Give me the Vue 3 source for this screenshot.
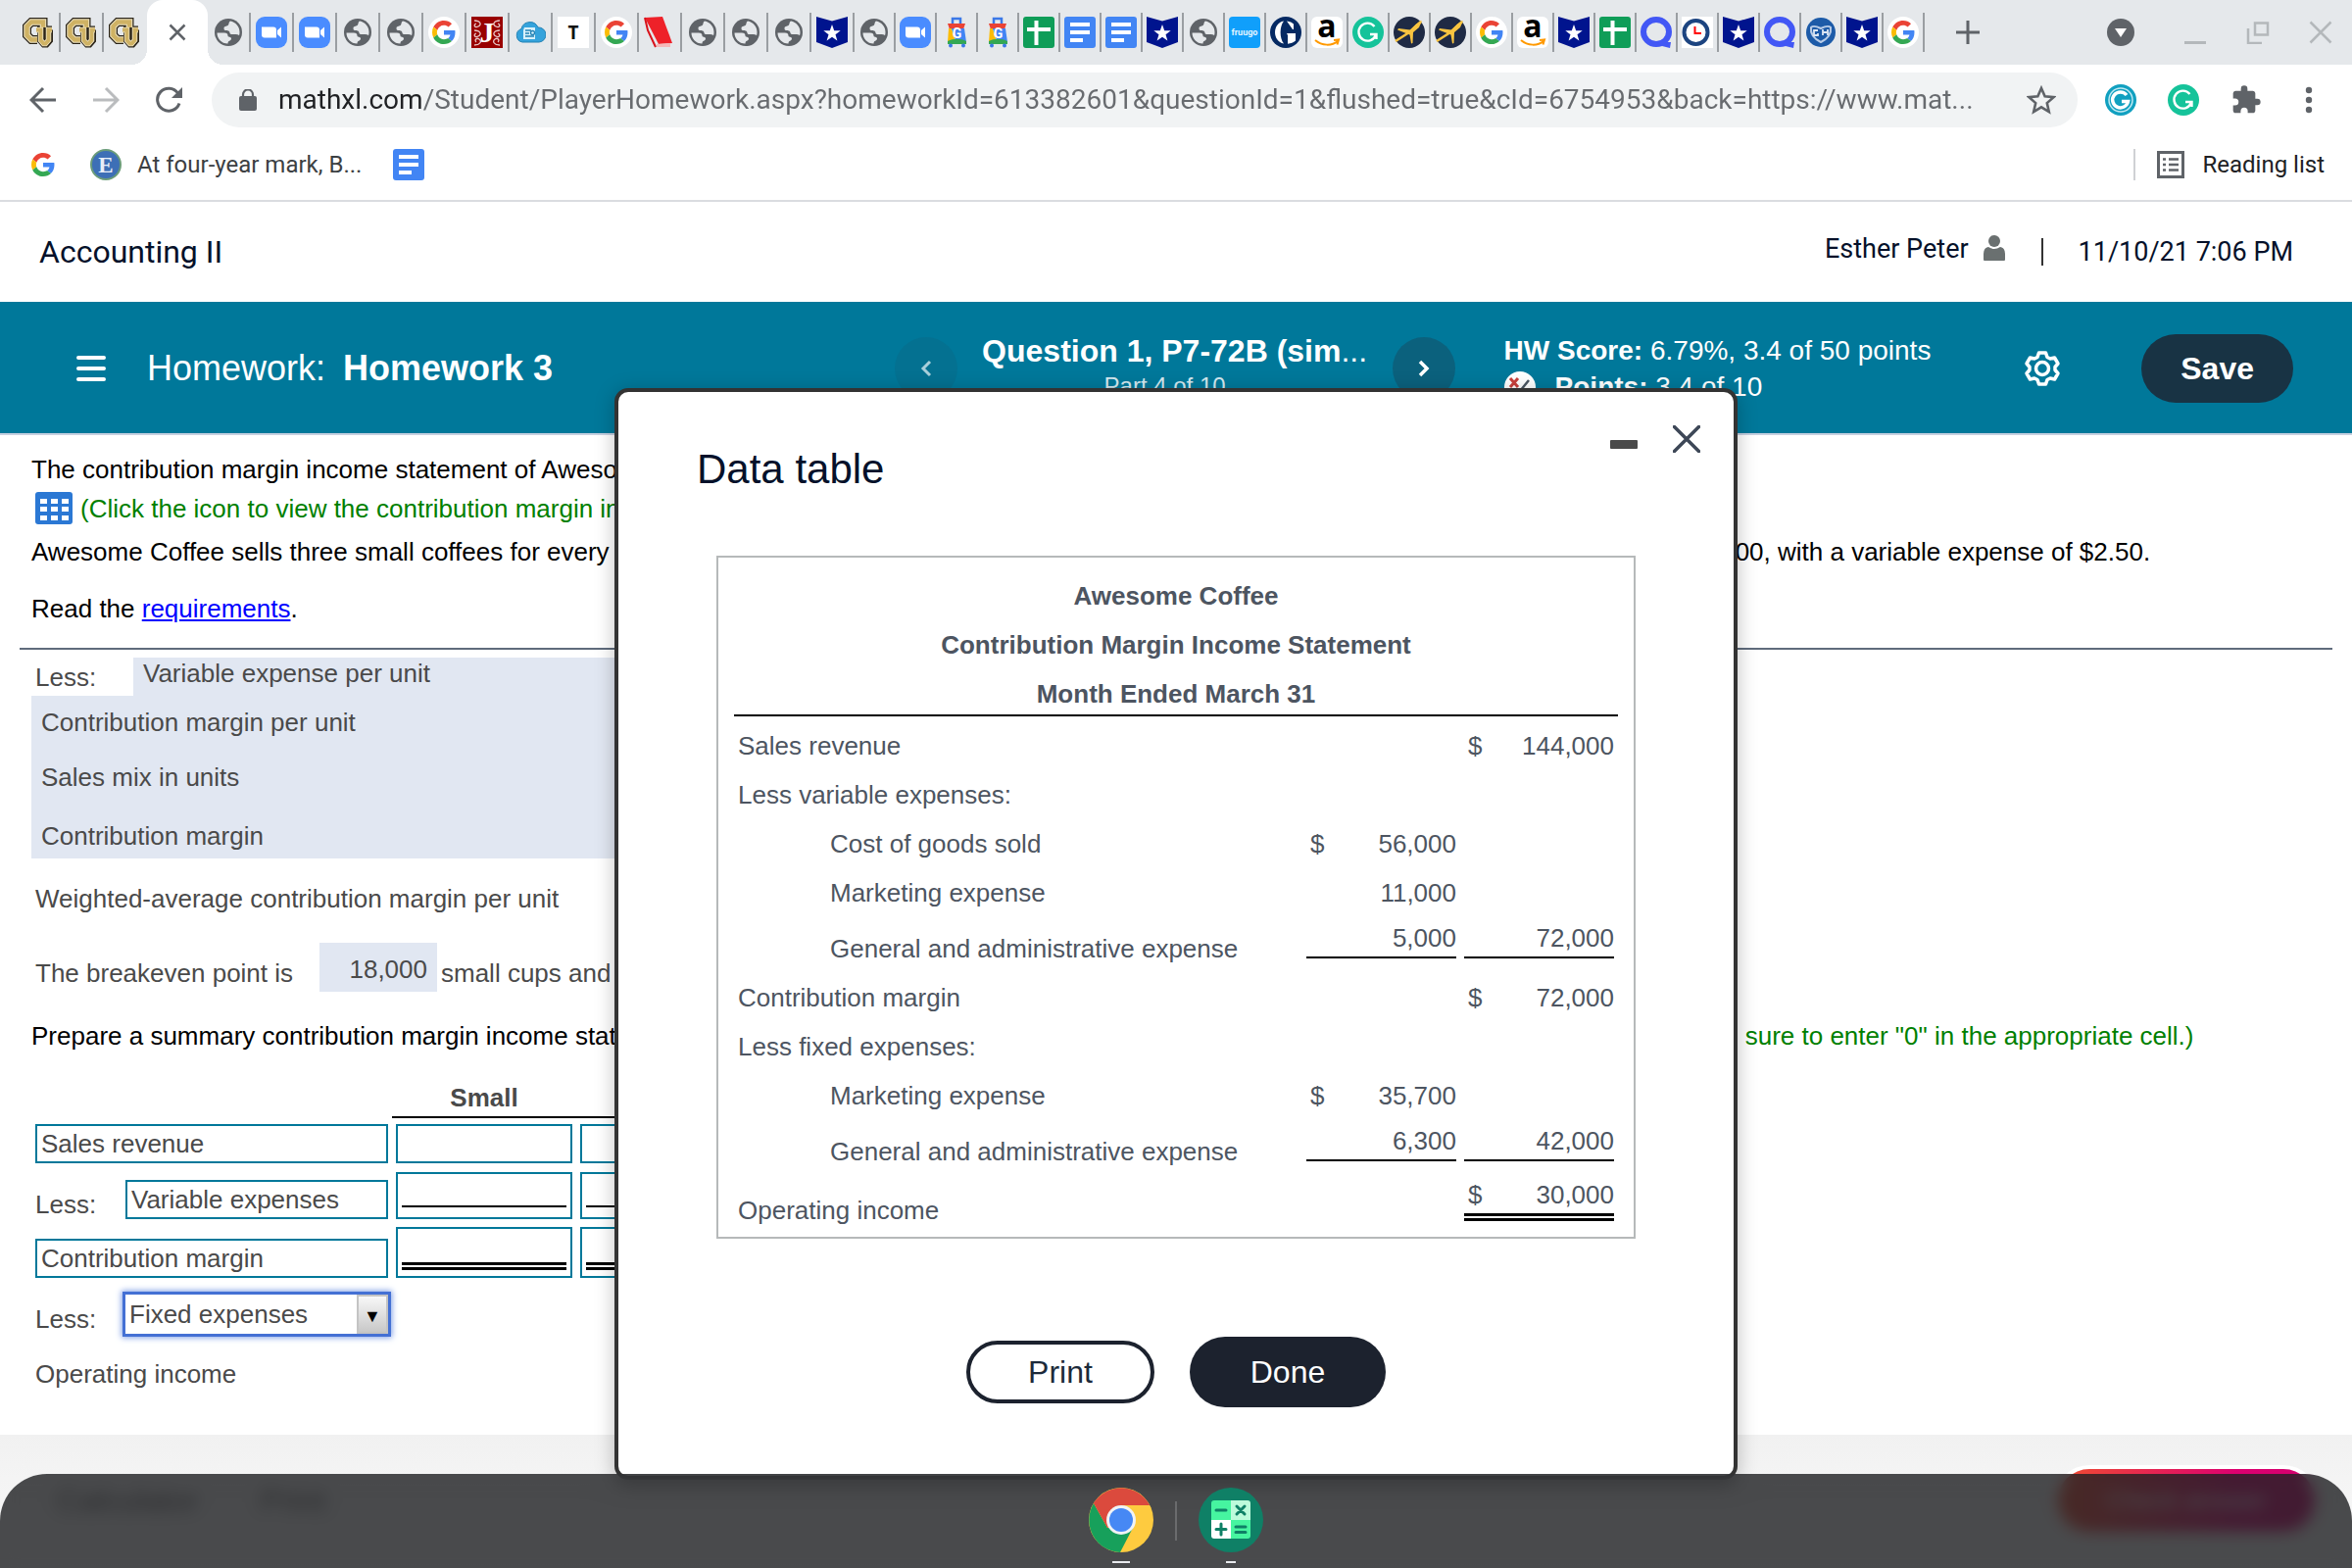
<template>
  <div class="screen">
    <svg class="symbols" aria-hidden="true">
      <symbol id="i-cu" viewBox="0 0 32 32">
        <path d="M21 11V5.500H9L4.500 10v9L9 23.500h6" fill="none" stroke="#2b2418" stroke-width="9" />
        <path d="M15 13.500h4V24l3 3.500h2l3-3.500V13.500h3" fill="none" stroke="#2b2418" stroke-width="8" />
        <path d="M21 11V5.500H9L4.500 10v9L9 23.500h6" fill="none" stroke="#f1e6c4" stroke-width="6.500" />
        <path d="M21 11V5.500H9L4.500 10v9L9 23.500h6" fill="none" stroke="#cfb264" stroke-width="4.500" />
        <path d="M14 13.500h4.500V24l3 3.500h2l3-3.500V13.500H30" fill="none" stroke="#f1e6c4" stroke-width="5.500" />
        <path d="M14 13.500h4.500V24l3 3.500h2l3-3.500V13.500H30" fill="none" stroke="#cfb264" stroke-width="3.800" />
      </symbol>
      <symbol id="i-globe" viewBox="0 0 32 32">
        <circle cx="16" cy="16" r="14" fill="#5f6368" />
        <path d="M18 4.500c5.500 1 9.500 5.500 9.500 11.500 0 1.200-.2 2.300-.5 3.300-1-1.300-2.500-1.300-4.500-1.300h-3.500c-2 0-1-3-3-3.500s-4.500 0-4.500-2.500 2.500-2 4-3 .5-3.300 2.500-4.500z" fill="#e5e8eb" />
        <path d="M4.500 16.500H12c2.500 0 3.500 1.200 3.500 3s3.500.5 3.500 3-3.500 1.500-3.500 5C9 27.500 4.500 22.500 4.500 16.500z" fill="#e5e8eb" />
      </symbol>
      <symbol id="i-zoom" viewBox="0 0 32 32">
        <rect width="32" height="32" rx="9" fill="#4a8cff" />
        <path d="M6 10.500h12q3 0 3 3v8H9q-3 0-3-3zM22 14l4-3.500v11L22 18z" fill="#fff" />
      </symbol>
      <symbol id="i-g" viewBox="0 0 48 48">
        <path fill="#EA4335" d="M24 9.500c3.540 0 6.710 1.220 9.210 3.600l6.850-6.850C35.900 2.380 30.470 0 24 0 14.620 0 6.510 5.380 2.560 13.220l7.980 6.190C12.430 13.720 17.740 9.500 24 9.500z" />
        <path fill="#4285F4" d="M46.980 24.550c0-1.570-.15-3.090-.38-4.550H24v9.020h12.940c-.58 2.960-2.260 5.480-4.780 7.180l7.730 6c4.510-4.180 7.090-10.360 7.090-17.650z" />
        <path fill="#FBBC05" d="M10.530 28.590c-.48-1.450-.76-2.990-.76-4.590s.27-3.140.76-4.590l-7.980-6.190C.92 16.460 0 20.120 0 24c0 3.880.92 7.540 2.560 10.780z" />
        <path fill="#34A853" d="M24 48c6.480 0 11.930-2.130 15.890-5.810l-7.730-6c-2.150 1.450-4.920 2.300-8.160 2.300-6.260 0-11.570-4.220-13.470-9.910l-7.980 6.190C6.510 42.620 14.620 48 24 48z" />
      </symbol>
      <symbol id="i-google" viewBox="0 0 32 32">
        <circle cx="16" cy="16" r="16" fill="#fff" />
        <use href="#i-g" x="4" y="4" width="24" height="24" />
      </symbol>
      <symbol id="i-jstor" viewBox="0 0 32 32">
        <rect width="32" height="32" fill="#900" />
        <path d="M3 4c6 0 8 4 4 6s-5-2-2-3M3 14c6 0 8 4 4 6s-5-2-2-3M3 29c6 0 8-4 5-6s-5 1-3 3M29 4c-6 0-8 4-4 6s5-2 2-3M29 14c-6 0-8 4-4 6s5-2 2-3M29 29c-6 0-8-4-5-6s5 1 3 3" fill="none" stroke="#e8c9c9" stroke-width="1.300" />
        <text x="16" y="26" text-anchor="middle" font-family="Liberation Serif, serif" font-size="30" font-weight="700" fill="#fff">J</text>
      </symbol>
      <symbol id="i-cloud" viewBox="0 0 32 32">
        <path d="M8 26a7 7 0 0 1-1-13.500A9 9 0 0 1 24 11a7.500 7.500 0 0 1 1 15z" fill="#35a3dc" stroke="#2382b5" />
        <path d="M10 11h11v12H9V14z" fill="#d9f1fb" />
        <path d="M11 14h6M11 17h4M11 20h9" stroke="#2382b5" stroke-width="1.500" />
        <circle cx="18.500" cy="16.500" r="2" fill="none" stroke="#2382b5" stroke-width="1.300" />
      </symbol>
      <symbol id="i-t" viewBox="0 0 32 32">
        <rect width="32" height="32" fill="#fff" />
        <text x="16" y="23" text-anchor="middle" font-family="Open Sans, sans-serif" font-size="19" font-weight="700" fill="#111">T</text>
      </symbol>
      <symbol id="i-book" viewBox="0 0 32 32">
        <path d="M1 1l18-1 10 27-14 1z" fill="#ee2129" />
        <path d="M1 1l3 13 8 17" fill="none" stroke="#d8121b" stroke-width="2" />
        <path d="M13 28l14-1v4H13z" fill="#f6b8b8" />
      </symbol>
      <symbol id="i-star" viewBox="0 0 32 32">
        <path d="M0 0l16 4.500L32 0v26l-16 6-16-6z" fill="#00148e" />
        <path d="M16 8l2.200 6.200h6.500l-5.200 4 1.900 6.300-5.400-3.800-5.400 3.800 1.900-6.300-5.200-4h6.500z" fill="#fff" />
      </symbol>
      <symbol id="i-bag" viewBox="0 0 32 32">
        <path d="M12 8V2h8v6" fill="none" stroke="#3b78e7" stroke-width="2.500" />
        <path d="M7 7h18l-2 6H9z" fill="#ea4335" />
        <path d="M8 12h3l4 13-8 1z" fill="#fbbc05" />
        <path d="M11 12h13l2 14-10 1z" fill="#4285f4" />
        <path d="M7 25c6-3 13-3 19 0v3H7z" fill="#34a853" />
        <circle cx="10" cy="29.500" r="2" fill="#3b78e7" /><circle cx="23" cy="29.500" r="2" fill="#3b78e7" />
        <text x="16.500" y="22" text-anchor="middle" font-family="Roboto, sans-serif" font-size="14" font-weight="700" fill="#fff">G</text>
      </symbol>
      <symbol id="i-sheets" viewBox="0 0 32 32">
        <rect width="32" height="32" rx="3" fill="#0f9d58" />
        <path d="M4 13h24M13.500 4v25" stroke="#fff" stroke-width="4" />
      </symbol>
      <symbol id="i-docs" viewBox="0 0 32 32">
        <rect width="32" height="32" rx="3" fill="#4285f4" />
        <path d="M6 8h20M6 16h20M6 24h13" stroke="#fff" stroke-width="4" />
      </symbol>
      <symbol id="i-fruugo" viewBox="0 0 32 32">
        <rect width="32" height="32" rx="4" fill="#109ffb" />
        <text x="16" y="19" text-anchor="middle" font-family="Roboto, sans-serif" font-size="9" font-weight="700" fill="#e2f4ff">fruugo</text>
      </symbol>
      <symbol id="i-guard" viewBox="0 0 32 32">
        <circle cx="16" cy="16" r="16" fill="#052962" />
        <path d="M14 4.500C2 6.500 2 25.500 14 27.500 9.500 22 9.500 10 14 4.500z" fill="#fff" />
        <path d="M17 4.500c3 .3 5.500 1.500 7 3V13h-1zM17 17h9v7.500c-2 1.800-5 3-8 3.200V19z" fill="#fff" />
      </symbol>
      <symbol id="i-amazon" viewBox="0 0 32 32">
        <rect width="32" height="32" rx="6" fill="#fff" />
        <text x="16" y="21" text-anchor="middle" font-family="Open Sans, sans-serif" font-size="32" font-weight="700" fill="#000">a</text>
        <path d="M4 24c7 6 17 6 23 1M23 24l5-.5-1.500 5" fill="none" stroke="#f90" stroke-width="2" />
      </symbol>
      <symbol id="i-grammarly" viewBox="0 0 32 32">
        <circle cx="16" cy="16" r="16" fill="#15c39a" />
        <path d="M22.500 10A9 9 0 1 0 24 18.500M18 18h6.500v5" fill="none" stroke="#fff" stroke-width="2.400" />
      </symbol>
      <symbol id="i-plane" viewBox="0 0 32 32">
        <circle cx="16" cy="16" r="16" fill="#1f2a44" />
        <path d="M2 25l14-9L28 5" fill="none" stroke="#f9c440" stroke-width="2.500" />
        <path d="M29 4l-3 7-6 5-.5 11-1.500.5-1.500-9L4 13.500 5 12l12 1.500 6-6z" fill="#f9c440" />
      </symbol>
      <symbol id="i-quill" viewBox="0 0 32 32">
        <ellipse cx="16" cy="15.500" rx="13" ry="12.500" fill="none" stroke="#4257f5" stroke-width="6" />
        <path d="M16 26h15l-1 6-8-2z" fill="#4257f5" />
      </symbol>
      <symbol id="i-clock" viewBox="0 0 32 32">
        <rect width="32" height="32" fill="#fff" />
        <circle cx="14.500" cy="16" r="12" fill="none" stroke="#1c4480" stroke-width="4" />
        <path d="M13.500 10v7H20" fill="none" stroke="#f00" stroke-width="2" />
      </symbol>
      <symbol id="i-crest" viewBox="0 0 32 32">
        <circle cx="16" cy="16" r="15" fill="#1d5ba8" />
        <path d="M6 11c2-2 6-1 10 1 4-2 8-3 10-1 1 7-4 12-10 15C10 23 5 18 6 11z" fill="none" stroke="#b9cde8" stroke-width="2" />
        <path d="M13 14H9v5h4v-2M18 13v6M23 13v6M18 16h5" fill="none" stroke="#dce6f3" stroke-width="1.800" />
      </symbol>
      <symbol id="i-gblue" viewBox="0 0 32 32">
        <circle cx="16" cy="16" r="16" fill="#11a0c0" />
        <circle cx="16" cy="16" r="12" fill="none" stroke="#bfe9f2" stroke-width="1.500" />
        <path d="M22 11a8 8 0 1 0 1.500 6.500H17" fill="none" stroke="#fff" stroke-width="3.500" />
      </symbol>
      <symbol id="i-enc" viewBox="0 0 32 32">
        <circle cx="16" cy="16" r="15" fill="#3d6fb6" stroke="#6b9c7a" stroke-width="2" />
        <text x="16" y="24" text-anchor="middle" font-family="Liberation Serif, serif" font-size="23" font-weight="700" fill="#e8eef8">E</text>
      </symbol>
    </svg>

    <div class="tab-strip">
      <div class="tab pinned" v-for="n in 3" :key="n">
        <svg class="favicon"><use href="#i-cu" /></svg>
      </div>
      <div class="tab-active">
        <button class="plain-btn" aria-label="Close tab">
          <svg width="18" height="18" viewBox="0 0 18 18"><path d="M1.500 1.500l15 15M16.500 1.500l-15 15" stroke="#5f6368" stroke-width="2.500" /></svg>
        </button>
      </div>
      <div class="tab" v-for="(icon, i) in tabs" :key="i" :class="{ narrow: i > 14 }">
        <svg class="favicon"><use :href="'#i-' + icon" /></svg>
      </div>
      <button class="plain-btn new-tab" aria-label="New tab">
        <svg width="24" height="24" viewBox="0 0 24 24"><path d="M12 0v24M0 12h24" stroke="#5f6368" stroke-width="3" /></svg>
      </button>
      <div class="window-btns">
        <button class="plain-btn" aria-label="Search tabs">
          <svg width="28" height="28" viewBox="0 0 28 28"><circle cx="14" cy="14" r="14" fill="#5f6368" /><path d="M8 10h12l-6 9z" fill="#fff" /></svg>
        </button>
        <button class="plain-btn" aria-label="Minimize">
          <svg width="24" height="24" viewBox="0 0 24 24"><path d="M1 22.500h22" stroke="#b4b8bb" stroke-width="3" /></svg>
        </button>
        <button class="plain-btn" aria-label="Restore">
          <svg width="24" height="24" viewBox="0 0 24 24"><path d="M9 2.500h13v12H9zM2 8v15h14" fill="none" stroke="#b4b8bb" stroke-width="2.500" /></svg>
        </button>
        <button class="plain-btn" aria-label="Close window">
          <svg width="24" height="24" viewBox="0 0 24 24"><path d="M1.500 1.500l21 21M22.500 1.500l-21 21" stroke="#b4b8bb" stroke-width="2.500" /></svg>
        </button>
      </div>
    </div>

    <div class="toolbar">
      <button class="plain-btn" aria-label="Back">
        <svg width="28" height="28" viewBox="0 0 28 28"><path d="M27 14H3M14 2L2 14l12 12" fill="none" stroke="#5f6368" stroke-width="3" /></svg>
      </button>
      <button class="plain-btn" aria-label="Forward">
        <svg width="28" height="28" viewBox="0 0 28 28"><path d="M1 14h24M14 2l12 12-12 12" fill="none" stroke="#babcbe" stroke-width="3" /></svg>
      </button>
      <button class="plain-btn" aria-label="Reload">
        <svg width="28" height="28" viewBox="0 0 28 28"><path d="M23.500 7A11.500 11.500 0 1 0 25 17.500" fill="none" stroke="#5f6368" stroke-width="3" /><path d="M28 1v11H17z" fill="#5f6368" /></svg>
      </button>
      <div class="omnibox">
        <svg width="18" height="22" viewBox="0 0 18 22"><rect y="7" width="18" height="15" rx="2" fill="#5f6368" /><path d="M4 8V5.500a5 5 0 0 1 10 0V8" fill="none" stroke="#5f6368" stroke-width="2.200" /></svg>
        <input class="url" type="text" aria-label="Address" v-model="url">
        <button class="plain-btn" aria-label="Bookmark">
          <svg width="30" height="30" viewBox="0 0 30 30"><path d="M15 3l3.600 8.300 9 .8-6.800 6 2 8.900L15 22.300 7.200 27l2-8.900-6.800-6 9-.8z" fill="none" stroke="#5f6368" stroke-width="2.600" /></svg>
        </button>
      </div>
      <button class="plain-btn" aria-label="Extension one"><svg class="favicon"><use href="#i-gblue" /></svg></button>
      <button class="plain-btn" aria-label="Extension two"><svg class="favicon"><use href="#i-grammarly" /></svg></button>
      <button class="plain-btn" aria-label="Extensions">
        <svg width="32" height="32" viewBox="0 0 24 24"><path d="M20.500 11H19V7c0-1.100-.9-2-2-2h-4V3.500a2.500 2.500 0 0 0-5 0V5H4c-1.100 0-2 .9-2 2v3.800h1.500a2.700 2.700 0 0 1 0 5.400H2V20c0 1.100.9 2 2 2h3.800v-1.500a2.700 2.700 0 0 1 5.400 0V22H17c1.100 0 2-.9 2-2v-4h1.500a2.500 2.500 0 0 0 0-5z" fill="#5f6368" /></svg>
      </button>
      <button class="plain-btn dots-menu" aria-label="Menu">
        <svg width="8" height="28" viewBox="0 0 8 28"><circle cx="4" cy="4" r="3.200" fill="#5f6368" /><circle cx="4" cy="14" r="3.200" fill="#5f6368" /><circle cx="4" cy="24" r="3.200" fill="#5f6368" /></svg>
      </button>
    </div>

    <div class="bookmarks">
      <a href="#" aria-label="Google"><svg width="24" height="24"><use href="#i-g" /></svg></a>
      <a href="#" class="bookmark"><svg class="favicon"><use href="#i-enc" /></svg>At four-year mark, B...</a>
      <a href="#" aria-label="Docs"><svg class="favicon"><use href="#i-docs" /></svg></a>
      <button class="plain-btn reading-list">
        <svg width="28" height="28" viewBox="0 0 28 28"><rect x="1.500" y="1.500" width="25" height="25" fill="none" stroke="#5f6368" stroke-width="3" /><path d="M6 8.500h3M12 8.500h10M6 14h3M12 14h10M6 19.500h3M12 19.500h10" stroke="#5f6368" stroke-width="2.600" /></svg>
        Reading list
      </button>
    </div>

    <header class="course-bar">
      <span class="course">Accounting II</span>
      <div class="user">
        <span class="user-name">Esther Peter</span>
        <svg width="24" height="26" viewBox="0 0 24 26"><circle cx="12" cy="6" r="6" fill="#6a7070" /><path d="M1 25V19q0-6 5-7 6 4 12 0 5 1 5 7v6q0 1-1 1H2q-1 0-1-1z" fill="#6a7070" /></svg>
        <i class="user-sep"></i>
        <span>11/10/21 7:06 PM</span>
      </div>
    </header>

    <div class="hw-bar">
      <div class="hw-name">
        <button class="plain-btn" aria-label="Navigation">
          <svg width="30" height="28" viewBox="0 0 30 28"><path d="M2 3h26M2 14h26M2 25h26" stroke="#fff" stroke-width="4" stroke-linecap="round" /></svg>
        </button>
        <span class="hw-label">Homework:</span><strong>Homework 3</strong>
      </div>
      <button class="round-btn dim" aria-label="Previous question">
        <svg width="12" height="18" viewBox="0 0 12 18"><path d="M10 2L3 9l7 7" fill="none" stroke="#a9cfdb" stroke-width="3" /></svg>
      </button>
      <div class="question">
        <strong>Question 1, P7-72B (sim<span class="dots">...</span></strong>
        <span class="part">Part 4 of 10</span>
      </div>
      <button class="round-btn" aria-label="Next question">
        <svg width="12" height="18" viewBox="0 0 12 18"><path d="M2 2l7 7-7 7" fill="none" stroke="#fff" stroke-width="3.500" /></svg>
      </button>
      <div class="score">
        <div><strong>HW Score:</strong> 6.79%, 3.4 of 50 points</div>
        <div class="points">
          <svg width="32" height="32" viewBox="0 0 32 32"><circle cx="16" cy="16" r="16" fill="#fff" /><path d="M6 7l8 9M14 7l-8 9" stroke="#c8403c" stroke-width="3" /><path d="M25 9L12 25l-4-4" fill="none" stroke="#4a5560" stroke-width="2.500" /></svg>
          <span><strong>Points:</strong> 3.4 of 10</span>
        </div>
      </div>
      <button class="plain-btn gear" aria-label="Settings">
        <svg width="38" height="38" viewBox="0 0 38 38" fill="none" stroke="#fff" stroke-width="3.500" stroke-linejoin="round"><path d="M15.500 3h7l1.500 4.500 3 1.500 4.500-1 3.500 6-3 3.500v3l3 3.500-3.500 6-4.500-1-3 1.500-1.500 4.500h-7L14 30.500 11 29l-4.500 1L3 24l3-3.500v-3L3 14l3.500-6 4.500 1 3-1.500z" /><circle cx="19" cy="19" r="6.500" /></svg>
      </button>
      <button class="save-btn">Save</button>
    </div>

    <main class="content">
      <p class="line first">The contribution margin income statement of Awesome Coffee for March follows:</p>
      <p class="line note">
        <svg width="38" height="34" viewBox="0 0 38 34"><rect width="38" height="33" rx="3" fill="#2b78d4" /><path d="M5 7h7v5H5zM16 7h7v5h-7zM27 7h7v5h-7zM5 15h7v5H5zM16 15h7v5h-7zM27 15h7v5h-7zM5 24h7v5H5zM16 24h7v5h-7zM27 24h7v5h-7z" fill="#fff" /></svg>
        (Click the icon to view the contribution margin income statement.)
      </p>
      <p class="line story">Awesome Coffee sells three small coffees for every large coffee. A small coffee sells for $3, with a variable expense of $1.50. A large coffee sells for $5.00, with a variable expense of $2.50.</p>
      <p class="line read">Read the <a href="#">requirements</a>.</p>
      <hr>

      <div class="answered">
        <div class="prefix-row">
          <span class="prefix">Less:</span>
          <span class="blue grow">Variable expense per unit</span>
        </div>
        <div class="blue row-a">Contribution margin per unit</div>
        <div class="blue row-b">Sales mix in units</div>
        <div class="blue row-c">Contribution margin</div>
      </div>
      <p class="line gray weighted">Weighted-average contribution margin per unit</p>
      <div class="breakeven gray">
        <span class="be-label">The breakeven point is</span>
        <span class="blue be-value">18,000</span>
        <span>small cups and</span>
      </div>
      <p class="line prepare">Prepare a summary contribution margin income statement to confirm the breakeven sales in units computed above. <span class="green">(For amounts with a $0 balance, be sure to enter "0" in the appropriate cell.)</span></p>

      <table class="answers">
        <thead>
          <tr><td class="label-col"></td><th v-for="c in columns" :key="c">{{ c }}</th></tr>
        </thead>
        <tbody>
          <tr v-for="row in answerRows" :key="row.label" :class="row.kind">
            <td>
              <div class="label-cell">
                <span v-if="row.prefix" class="ans-prefix">{{ row.prefix }}</span>
                <span class="box">{{ row.label }}</span>
              </div>
            </td>
            <td v-for="c in columns" :key="c">
              <div class="cell"><input type="text" :aria-label="row.label + ' ' + c"></div>
            </td>
          </tr>
          <tr class="pick">
            <td>
              <div class="label-cell">
                <label class="ans-prefix" for="account">Less:</label>
                <div class="select-wrap">
                  <select id="account" v-model="account">
                    <option>Fixed expenses</option>
                    <option>Variable expenses</option>
                  </select>
                  <span class="arrow">▼</span>
                </div>
              </div>
            </td>
          </tr>
          <tr class="last"><td>Operating income</td></tr>
        </tbody>
      </table>
    </main>

    <footer class="page-footer">
      <button class="plain-btn foot-link">Calculator</button>
      <button class="plain-btn foot-link">Print</button>
      <button class="check-btn">Check answer</button>
    </footer>

    <section class="modal" role="dialog" aria-labelledby="modal-title">
      <div class="modal-head">
        <h2 id="modal-title">Data table</h2>
        <div class="modal-btns">
          <button class="plain-btn" aria-label="Minimize dialog">
            <svg width="28" height="28" viewBox="0 0 28 28"><rect y="15" width="28" height="9" rx="1" fill="#4a4a4a" /></svg>
          </button>
          <button class="plain-btn" aria-label="Close dialog">
            <svg width="28" height="28" viewBox="0 0 28 28"><path d="M1.500 1.500l25 25M26.500 1.500l-25 25" stroke="#3d4757" stroke-width="3.500" stroke-linecap="round" /></svg>
          </button>
        </div>
      </div>
      <div class="frame">
        <table class="statement">
          <colgroup><col><col class="amt-col"><col class="amt-col"></colgroup>
          <thead>
            <tr><th colspan="3">Awesome Coffee</th></tr>
            <tr><th colspan="3">Contribution Margin Income Statement</th></tr>
            <tr><th colspan="3" class="head-line">Month Ended March 31</th></tr>
          </thead>
          <tbody>
            <tr v-for="(r, i) in statement" :key="i" :class="{ tall: r.rule === 'single', total: r.rule === 'double' }">
              <td :class="{ indent: r.indent }">{{ r.label }}</td>
              <td v-for="(a, k) in [r.a, r.b]" :key="k">
                <div v-if="a" class="amount" :class="r.rule">
                  <span>{{ a.sign ? '$' : '' }}</span><span>{{ a.value }}</span>
                </div>
              </td>
            </tr>
          </tbody>
        </table>
      </div>
      <div class="modal-actions">
        <button class="print-btn">Print</button>
        <button class="done-btn">Done</button>
      </div>
    </section>

    <div class="shelf">
      <button class="plain-btn app" aria-label="Chrome">
        <svg width="66" height="66" viewBox="0 0 66 66">
          <circle cx="33" cy="33" r="33" fill="#fecb3f" />
          <path d="M33 33L5 16A33 33 0 0 1 62 18H33z" fill="#db4a3d" />
          <path d="M5 16A33 33 0 0 0 32 66L45 41 19 41z" fill="#17a05b" />
          <path d="M5 16l14 25 14-8V18h29A33 33 0 0 0 5 16z" fill="#db4a3d" />
          <circle cx="33" cy="33" r="15" fill="#f1f3f4" />
          <circle cx="33" cy="33" r="12" fill="#4688f4" />
        </svg>
        <i class="dash wide"></i>
      </button>
      <i class="shelf-sep"></i>
      <button class="plain-btn app" aria-label="Calculator app">
        <svg width="66" height="66" viewBox="0 0 66 66">
          <circle cx="33" cy="33" r="33" fill="#0f8066" />
          <path d="M16 13h17v20H13V16q0-3 3-3z" fill="#46f5a0" />
          <path d="M33 13h17q3 0 3 3v17H33z" fill="#bdfbdb" />
          <path d="M13 33h20v19H16q-3 0-3-3z" fill="#fff" />
          <path d="M33 33h20v16q0 3-3 3H33z" fill="#46f5a0" />
          <path d="M18 23h10M39 19l8 8M47 19l-8 8M23 37v11M18 42.500h10M38 40h10M38 45.500h10" stroke="#0f8066" stroke-width="3" stroke-linecap="round" />
        </svg>
        <i class="dash"></i>
      </button>
    </div>
  </div>
</template>

<script setup>
import { ref } from 'vue'

const url = ref('mathxl.com/Student/PlayerHomework.aspx?homeworkId=613382601&questionId=1&flushed=true&cId=6754953&back=https://www.mat...')
const account = ref('Fixed expenses')

const tabs = [
  'globe', 'zoom', 'zoom', 'globe', 'globe', 'google', 'jstor', 'cloud', 't', 'google', 'book',
  'globe', 'globe', 'globe', 'star', 'globe', 'zoom', 'bag', 'bag', 'sheets', 'docs', 'docs',
  'star', 'globe', 'fruugo', 'guard', 'amazon', 'grammarly', 'plane', 'plane', 'google', 'amazon',
  'star', 'sheets', 'quill', 'clock', 'star', 'quill', 'crest', 'star', 'google'
]

const columns = ['Small', 'Large', 'Total']

const answerRows = [
  { label: 'Sales revenue', kind: 'plain' },
  { prefix: 'Less:', label: 'Variable expenses', kind: 'single-line' },
  { label: 'Contribution margin', kind: 'double-line' }
]

const statement = [
  { label: 'Sales revenue', b: { sign: true, value: '144,000' } },
  { label: 'Less variable expenses:' },
  { label: 'Cost of goods sold', indent: true, a: { sign: true, value: '56,000' } },
  { label: 'Marketing expense', indent: true, a: { value: '11,000' } },
  { label: 'General and administrative expense', indent: true, a: { value: '5,000' }, b: { value: '72,000' }, rule: 'single' },
  { label: 'Contribution margin', b: { sign: true, value: '72,000' } },
  { label: 'Less fixed expenses:' },
  { label: 'Marketing expense', indent: true, a: { sign: true, value: '35,700' } },
  { label: 'General and administrative expense', indent: true, a: { value: '6,300' }, b: { value: '42,000' }, rule: 'single' },
  { label: 'Operating income', b: { sign: true, value: '30,000' }, rule: 'double' }
]
</script>

<style>
body {
  margin: 0;
}
</style>

<style scoped>
.screen {
  position: relative;
  display: flex;
  flex-direction: column;
  min-height: 100vh;
  overflow: hidden;
  background: #fff;
  font-family: "Liberation Sans", Arial, sans-serif;
  font-size: 26px;
  line-height: 30px;
}

.screen * {
  box-sizing: border-box;
}

svg {
  display: block;
  flex-shrink: 0;
}

.symbols {
  display: none;
}

.plain-btn {
  display: flex;
  align-items: center;
  border: none;
  background: none;
  padding: 0;
  font: inherit;
  color: inherit;
  cursor: pointer;
}

.favicon {
  width: 32px;
  height: 32px;
}

/* browser tabs */
.tab-strip {
  display: flex;
  align-items: center;
  height: 66px;
  padding-left: 18px;
  background: #e5e8eb;
}

.tab {
  display: flex;
  align-items: center;
  justify-content: center;
  width: 44px;
  height: 40px;
  border-right: 2px solid #9a9ea2;
}

.tab.narrow {
  width: 42px;
}

.tab.pinned:has(+ .tab-active) {
  border-color: transparent;
}

.tab-active {
  position: relative;
  display: flex;
  align-items: center;
  justify-content: center;
  width: 62px;
  height: 66px;
  background: #fff;
  border-radius: 16px 16px 0 0;
}

.tab-active::before,
.tab-active::after {
  content: "";
  position: absolute;
  bottom: 0;
  width: 16px;
  height: 16px;
}

.tab-active::before {
  left: -16px;
  background: radial-gradient(circle at 0 0, transparent 16px, #fff 16px);
}

.tab-active::after {
  right: -16px;
  background: radial-gradient(circle at 100% 0, transparent 16px, #fff 16px);
}

.new-tab {
  margin-left: 32px;
}

.window-btns {
  display: flex;
  align-items: center;
  gap: 40px;
  margin-left: auto;
  padding-right: 20px;
}

.window-btns .plain-btn:first-child {
  margin-right: 10px;
}

/* address row */
.toolbar {
  display: flex;
  align-items: center;
  gap: 32px;
  height: 72px;
  padding: 0 40px 0 30px;
}

.toolbar > .plain-btn:nth-child(-n+2) {
  margin-right: 4px;
}

.toolbar .dots-menu {
  margin-left: 12px;
}

.omnibox {
  display: flex;
  flex: 1;
  align-items: center;
  height: 56px;
  margin: 0 -4px 0 -2px;
  padding: 0 22px 0 28px;
  background: #f1f3f4;
  border-radius: 28px;
}

.url {
  flex: 1;
  min-width: 0;
  margin-left: 22px;
  padding: 0;
  border: none;
  outline: none;
  font-family: Roboto, sans-serif;
  font-size: 28px;
  line-height: 40px;
  color: transparent;
  background: linear-gradient(to right, #202124 147px, #686b6f 147px);
  -webkit-background-clip: text;
  background-clip: text;
}

.bookmarks {
  display: flex;
  align-items: center;
  gap: 32px;
  height: 68px;
  padding: 0 28px 6px 32px;
  border-bottom: 2px solid #dadce0;
  font-family: Roboto, sans-serif;
  font-size: 24px;
}

.bookmarks a {
  color: #3c4043;
  text-decoration: none;
}

.bookmarks .bookmark {
  display: flex;
  align-items: center;
  gap: 16px;
  margin-left: 4px;
}

.reading-list {
  gap: 18px;
  height: 32px;
  margin-left: auto;
  padding-left: 22px;
  border-left: 2px solid #cfd1d4;
  color: #202124;
}

/* course header */
.course-bar {
  display: flex;
  align-items: center;
  justify-content: space-between;
  height: 102px;
  padding: 0 60px 0 40px;
  font-family: Roboto, sans-serif;
  color: #05112a;
}

.course {
  font-size: 32px;
}

.user {
  display: flex;
  align-items: center;
  font-size: 27px;
}

.user-name {
  padding-bottom: 6px;
}

.user svg {
  margin: 0 36px 8px 14px;
}

.user-sep {
  width: 2px;
  height: 28px;
  margin-right: 36px;
  background: #333;
}

/* homework bar */
.hw-bar {
  display: flex;
  align-items: center;
  height: 136px;
  padding: 2px 60px 0 0;
  border-bottom: 2px solid #c7d0e0;
  background: #00789a;
  color: #fff;
}

.hw-name {
  display: flex;
  align-items: center;
  flex: 0 0 39%;
  padding-left: 78px;
  font-size: 36px;
}

.hw-label {
  margin: 0 18px 0 42px;
}

.round-btn {
  display: flex;
  align-items: center;
  justify-content: center;
  width: 64px;
  height: 64px;
  border: none;
  border-radius: 50%;
  background: #0b617d;
}

.round-btn.dim {
  background: #047191;
}

.question {
  display: flex;
  flex-direction: column;
  align-items: center;
  width: 400px;
  margin: 0 22px;
  font-size: 24px;
  line-height: 36px;
  white-space: nowrap;
}

.question strong {
  font-size: 32px;
}

.dots {
  font-weight: 400;
}

.part {
  padding-right: 20px;
  color: #d5e8ef;
}

.score {
  margin-left: 50px;
  font-size: 28px;
  line-height: 37px;
  white-space: nowrap;
}

.points {
  display: flex;
  align-items: center;
  gap: 20px;
}

.gear {
  margin: 0 82px 0 auto;
}

.save-btn {
  height: 70px;
  padding: 0 40px;
  border: none;
  border-radius: 35px;
  background: #183344;
  color: #fff;
  font-family: inherit;
  font-size: 32px;
  font-weight: 700;
}

/* exercise text */
.content {
  flex: 1;
  padding: 20px 32px 0;
}

.line {
  margin: 0;
  white-space: nowrap;
  color: #000;
}

.line.note {
  display: flex;
  align-items: center;
  gap: 8px;
  height: 30px;
  margin: 10px 0 14px 4px;
  color: #008000;
}

.line.read {
  margin-top: 28px;
}

.read a {
  color: #00f;
}

hr {
  height: 2px;
  margin: 25px -12px 8px;
  border: none;
  background: #5f6b7c;
}

.answered {
  width: 932px;
  color: #4a4a4a;
}

.prefix-row {
  display: flex;
  height: 39px;
}

.prefix {
  align-self: flex-end;
  width: 104px;
  padding: 0 4px 4px;
}

.blue {
  display: flex;
  align-items: flex-end;
  padding: 0 10px 8px;
  background: #e1e7f2;
}

.grow {
  flex: 1;
}

.row-a {
  height: 50px;
}

.row-b {
  height: 56px;
}

.row-c {
  height: 60px;
}

.line.gray,
.gray {
  color: #4a4a4a;
}

.line.weighted {
  margin: 26px 4px 30px;
}

.breakeven {
  display: flex;
  align-items: flex-end;
  gap: 4px;
  height: 50px;
  margin-left: 4px;
  line-height: 38px;
}

.be-label {
  width: 286px;
}

.be-value {
  justify-content: flex-end;
  width: 120px;
  height: 50px;
  line-height: 30px;
}

.line.prepare {
  margin-top: 30px;
}

.green {
  color: #008000;
}

/* answer grid */
.answers {
  table-layout: fixed;
  width: 932px;
  margin-top: 24px;
  border-collapse: collapse;
  color: #4a4a4a;
}

.answers td,
.answers th {
  padding: 4px;
  vertical-align: bottom;
}

.answers th {
  height: 44px;
  border-bottom: 2px solid #000;
}

.answers .label-col {
  width: 368px;
}

.answers .plain {
  height: 51px;
}

.answers .single-line {
  height: 57px;
}

.answers .double-line {
  height: 60px;
}

.answers .pick {
  height: 57px;
}

.answers .last td {
  height: 56px;
}

.label-cell {
  display: flex;
  align-items: flex-end;
}

.ans-prefix {
  width: 92px;
}

.box {
  flex: 1;
  height: 40px;
  padding: 3px 4px;
  border: 2px solid #00789a;
}

.cell {
  height: 40px;
  padding: 2px 4px;
  border: 2px solid #00789a;
}

.cell input {
  display: block;
  width: 100%;
  height: 100%;
  padding: 0;
  border: none;
  outline: none;
  background: transparent;
  font: inherit;
}

.single-line .cell,
.double-line .cell {
  height: 48px;
  padding-bottom: 10px;
}

.single-line input {
  border-bottom: 2px solid #000;
}

.double-line .cell {
  height: 52px;
  padding-bottom: 6px;
}

.double-line input {
  border-bottom: 8px double #000;
}

.select-wrap {
  position: relative;
  flex: 1;
  height: 40px;
  box-shadow: 0 0 0 3px #4470d4, 0 0 6px 4px #7f9fe6;
}

.select-wrap select {
  width: 100%;
  height: 100%;
  padding: 0 4px;
  border: none;
  outline: none;
  appearance: none;
  background: #fff;
  color: #4a4a4a;
  font: inherit;
}

.arrow {
  position: absolute;
  top: 0;
  right: 0;
  width: 32px;
  height: 40px;
  border: 2px solid #c4c4c4;
  background: linear-gradient(#f8f8f8, #c8c8c8);
  color: #000;
  font-size: 18px;
  line-height: 40px;
  text-align: center;
  pointer-events: none;
}

.page-footer {
  display: flex;
  align-items: flex-start;
  height: 136px;
  padding: 35px 38px 0 58px;
  background: linear-gradient(#f1f1f1, #fafafa);
}

.foot-link {
  height: 64px;
  margin-right: 64px;
  color: #666;
  font-size: 32px;
}

.check-btn {
  width: 262px;
  height: 64px;
  margin-left: auto;
  border: none;
  border-radius: 32px;
  background: linear-gradient(to right, #f04e30, #dc0070 70%, #d2006e);
  box-shadow: 0 0 0 4px #fff;
  color: #fff;
  font: inherit;
}

/* data table window */
.modal {
  position: absolute;
  top: 396px;
  left: 0;
  right: 0;
  width: 1146px;
  max-width: 94%;
  margin: 0 auto;
  padding-bottom: 70px;
  border: 4px solid #333;
  border-radius: 14px;
  background: #fff;
  box-shadow: 0 4px 20px rgba(0, 0, 0, 0.25);
}

.modal-head {
  display: flex;
  align-items: flex-start;
  justify-content: space-between;
  padding: 34px 34px 0 80px;
}

.modal-head h2 {
  margin: 21px 0 0;
  color: #05112a;
  font-size: 42px;
  font-weight: 400;
  line-height: 48px;
}

.modal-btns {
  display: flex;
  gap: 36px;
}

.frame {
  margin: 64px 100px 0;
  padding: 14px 16px 2px;
  border: 2px solid #b6b9ba;
}

.statement {
  table-layout: fixed;
  width: 100%;
  border-collapse: separate;
  border-spacing: 0;
  color: #4d5561;
}

.amt-col {
  width: 161px;
}

.statement th {
  padding: 0;
  line-height: 50px;
}

.statement .head-line {
  padding-bottom: 3px;
  background: linear-gradient(#000, #000) 0 46px / 100% 2px no-repeat;
}

.statement td {
  height: 50px;
  padding: 0 4px;
  vertical-align: bottom;
  line-height: 50px;
}

.statement td.indent {
  padding-left: 98px;
}

.statement tr.tall td {
  height: 57px;
}

.statement tr.total td {
  height: 60px;
}

.amount {
  display: flex;
  justify-content: space-between;
  padding-left: 4px;
}

.amount.single {
  margin-bottom: 15px;
  padding-bottom: 4px;
  border-bottom: 2px solid #000;
  line-height: 30px;
}

.amount.double {
  margin-bottom: 14px;
  padding-bottom: 4px;
  border-bottom: 8px double #000;
  line-height: 30px;
}

.modal-actions {
  display: flex;
  align-items: center;
  justify-content: center;
  gap: 36px;
  margin-top: 100px;
}

.print-btn,
.done-btn {
  font-family: inherit;
  font-size: 32px;
}

.print-btn {
  width: 192px;
  height: 64px;
  border: 4px solid #1c222e;
  border-radius: 32px;
  background: #fff;
  color: #1c2a3a;
}

.done-btn {
  width: 200px;
  height: 72px;
  border: none;
  border-radius: 36px;
  background: #1c222e;
  color: #fff;
}

/* system shelf */
.shelf {
  position: absolute;
  left: 0;
  right: 0;
  bottom: 0;
  display: flex;
  justify-content: center;
  align-items: flex-start;
  gap: 22px;
  height: 96px;
  padding-top: 14px;
  border-radius: 48px 48px 0 0;
  background: rgba(32, 33, 36, 0.81);
  backdrop-filter: blur(8px);
}

.app {
  flex-direction: column;
  gap: 9px;
}

.dash {
  width: 10px;
  height: 2px;
  background: #e8eaed;
}

.dash.wide {
  width: 18px;
}

.shelf-sep {
  width: 2px;
  height: 40px;
  margin-top: 14px;
  background: #6a6b6d;
}
</style>
